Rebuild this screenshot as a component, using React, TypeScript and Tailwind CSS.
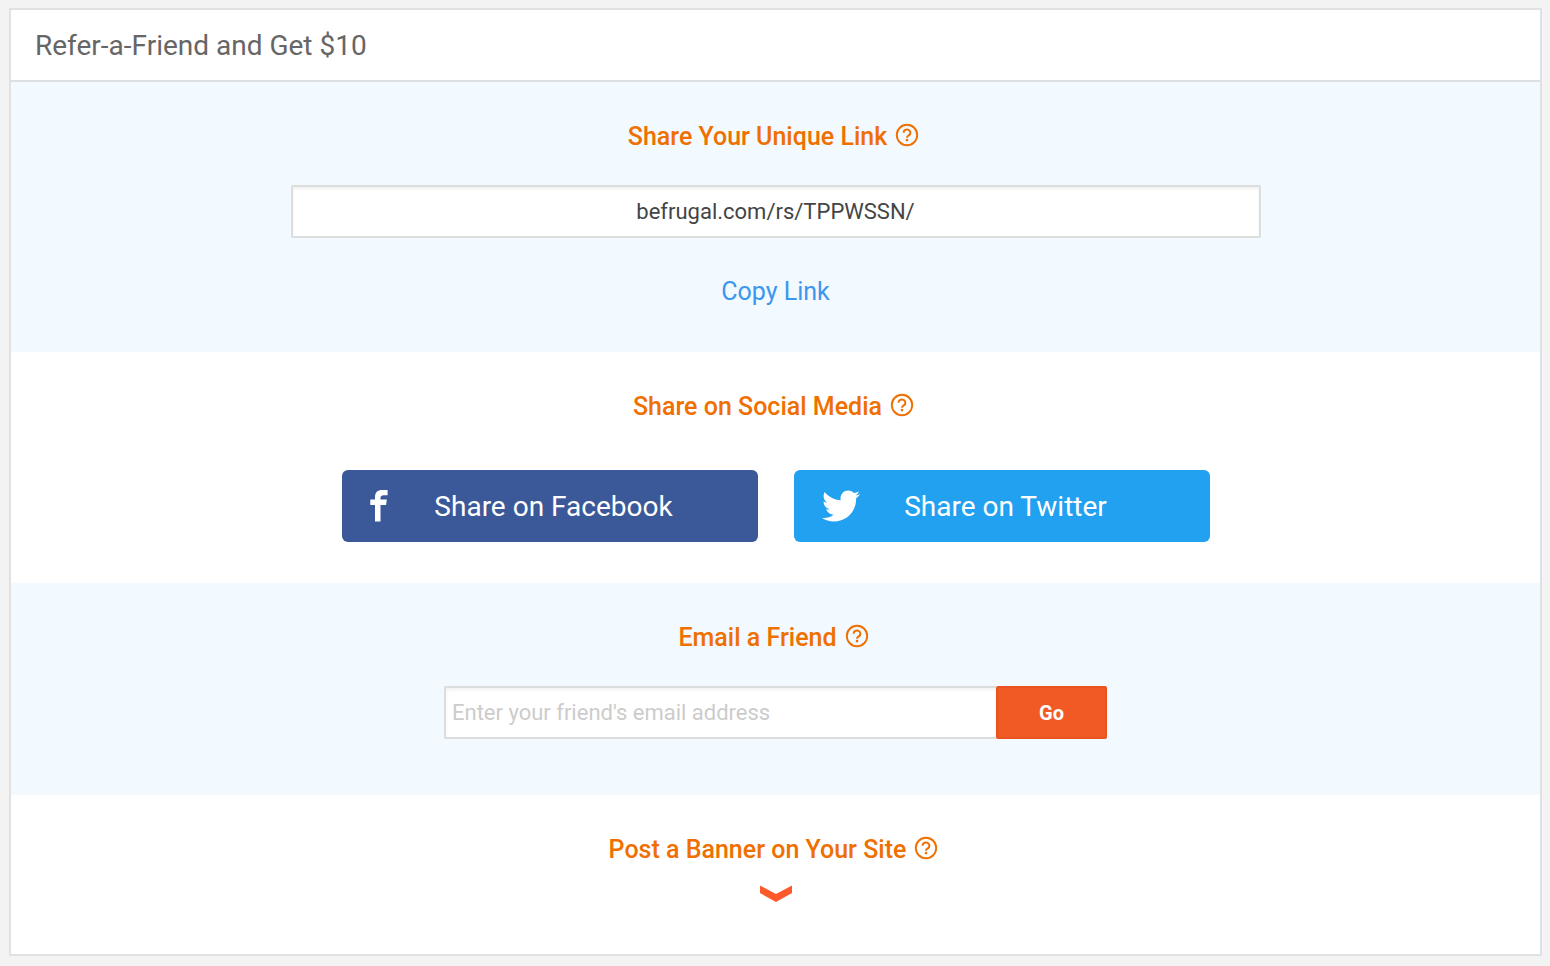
import React, { useState } from 'react';
import { FaTwitter } from 'react-icons/fa';

const HelpIcon: React.FC = () => (
    <svg viewBox="0 0 24 24" className="w-6 h-6" fill="none" stroke="currentColor" aria-hidden="true">
        <circle cx="12" cy="12" r="10.2" strokeWidth="1.9" />
        <path d="M8.6 9.7a3.4 3.2 0 1 1 5.3 2.6c-1.2.8-1.9 1.2-1.9 2.4" strokeWidth="2" />
        <circle cx="12" cy="17.1" r="1.3" fill="currentColor" stroke="none" />
    </svg>
);

const FacebookIcon: React.FC = () => (
    <svg viewBox="0 0 18 32" className="w-[18px] h-8" fill="currentColor" aria-hidden="true">
        <path d="M5 31.5V15H.3V9.5H5V7C5 2.4 7.6 0 12 0h5.6v5.2h-3.8c-2.3 0-3.3.9-3.3 2.9v1.4h6.3l-.7 5.5h-5.6v16.5z" />
    </svg>
);

interface SectionProps {
    title: string;
    className: string;
    children: React.ReactNode;
}

const Section: React.FC<SectionProps> = ({ title, className, children }) => (
    <section className={`flex flex-col items-center px-6 pt-[39px] ${className}`}>
        <div className="flex items-center gap-2 pr-1 text-[#ef7000]">
            <h2 className="text-[25px] leading-8 font-medium">{title}</h2>
            <button type="button" aria-label={`Help: ${title}`} className="mb-1 cursor-pointer">
                <HelpIcon />
            </button>
        </div>
        {children}
    </section>
);

interface ShareButtonProps {
    label: string;
    icon: React.ReactNode;
    className: string;
}

const ShareButton: React.FC<ShareButtonProps> = ({ label, icon, className }) => (
    <button
        type="button"
        className={`flex flex-1 items-center h-[72px] pl-7 pr-[58px] rounded-md text-white cursor-pointer ${className}`}
    >
        <span className="flex w-[38px]">{icon}</span>
        <span className="flex-1 pt-0.5 text-center text-[28px] leading-8">{label}</span>
    </button>
);

const App: React.FC = () => {
    const [email, setEmail] = useState('');
    const [bannerOpen, setBannerOpen] = useState(false);
    const link = 'befrugal.com/rs/TPPWSSN/';

    return (
        <div className="min-h-screen bg-[#f3f3f3] pt-2 pb-2.5 pl-[9px] pr-2 font-['Roboto',sans-serif]">
            <main className="bg-white border-2 border-[#e0e1e2]">
                <h1 className="px-6 pt-5 pb-[18px] text-[28px] leading-8 text-[#666666] border-b-2 border-[#dddfe1]">
                    Refer-a-Friend and Get $10
                </h1>

                <Section title="Share Your Unique Link" className="bg-[#f2f9ff] pb-11">
                    <input
                        type="text"
                        readOnly
                        value={link}
                        aria-label="Your unique link"
                        className="mt-8 w-full max-w-[970px] h-[53px] bg-white border-2 border-[#dcdddd] rounded-xs text-center text-[22px] text-[#444444] shadow-[inset_0_2px_3px_rgba(0,0,0,0.06)]"
                    />
                    <button
                        type="button"
                        onClick={() => navigator.clipboard.writeText(link)}
                        className="mt-[38px] text-[25px] leading-8 text-[#3b97ee] cursor-pointer"
                    >
                        Copy Link
                    </button>
                </Section>

                <Section title="Share on Social Media" className="pb-[41px]">
                    <div className="mt-[47px] flex w-full max-w-[868px] gap-9">
                        <ShareButton label="Share on Facebook" icon={<FacebookIcon />} className="bg-[#3b5998]" />
                        <ShareButton
                            label="Share on Twitter"
                            icon={<FaTwitter className="w-[38px] h-[38px]" />}
                            className="bg-[#22a1f1]"
                        />
                    </div>
                </Section>

                <Section title="Email a Friend" className="bg-[#f2f9ff] pb-14">
                    <form className="mt-8 flex w-full max-w-[663px]" onSubmit={(e) => e.preventDefault()}>
                        <input
                            type="email"
                            value={email}
                            onChange={(e) => setEmail(e.target.value)}
                            placeholder="Enter your friend's email address"
                            aria-label="Friend's email address"
                            className="flex-1 min-w-0 h-[53px] px-1.5 bg-white border-2 border-r-0 border-[#dcdddd] rounded-l-xs text-[22px] text-[#444444] placeholder:text-[#cccccc] shadow-[inset_0_2px_3px_rgba(0,0,0,0.06)]"
                        />
                        <button
                            type="submit"
                            className="w-[111px] h-[53px] bg-[#f15a24] border-2 border-[#e9531f] rounded-xs text-xl font-bold text-white cursor-pointer"
                        >
                            Go
                        </button>
                    </form>
                </Section>

                <Section title="Post a Banner on Your Site" className="pb-[51px]">
                    <button
                        type="button"
                        aria-label="Show banners"
                        aria-expanded={bannerOpen}
                        onClick={() => setBannerOpen(!bannerOpen)}
                        className="mt-[19px] text-[#fc5a2a] cursor-pointer"
                    >
                        <svg viewBox="0 0 34 18" className="w-[34px] h-[18px]" fill="currentColor" aria-hidden="true">
                            <path d="M1 .5 17 9 33 .5V8L17 17 1 8z" />
                        </svg>
                    </button>
                </Section>
            </main>
        </div>
    );
};

export default App;
